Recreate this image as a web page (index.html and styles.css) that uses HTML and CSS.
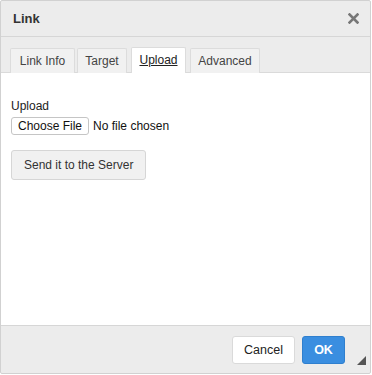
FILE: index.html
```html
<!DOCTYPE html>
<html lang="en">
<head>
  <meta charset="UTF-8">
  <title>Link</title>
  <link rel="stylesheet" href="styles.css">
</head>
<body>
  <div class="dialog">
    <div class="dialog-head">
      <span class="dialog-title">Link</span>
      <svg class="dialog-close" width="11" height="11" viewBox="0 0 11 11">
        <path d="M1.5 1.5 L9.5 9.5 M9.5 1.5 L1.5 9.5" stroke="#777" stroke-width="2.6" stroke-linecap="square"/>
      </svg>
    </div>

    <div class="tabs">
      <span class="tab tab-info">Link Info</span>
      <span class="tab tab-target">Target</span>
      <span class="tab tab-upload tab-active">Upload</span>
      <span class="tab tab-advanced">Advanced</span>
    </div>

    <div class="panel">
      <label class="field-label">Upload</label>
      <div class="file-row">
        <span class="file-btn">Choose File</span>
        <span class="file-name">No file chosen</span>
      </div>
      <span class="send-btn">Send it to the Server</span>
    </div>

    <div class="dialog-foot">
      <span class="btn btn-cancel">Cancel</span>
      <span class="btn btn-ok">OK</span>
      <span class="grip"></span>
    </div>
  </div>
</body>
</html>
```

FILE: styles.css
```css
body {
  margin: 0;
  background: #ffffff;
  font-family: 'Liberation Sans', Arial, sans-serif;
  font-size: 12px;
  color: #222;
}

.dialog {
  width: 371px;
  height: 374px;
  box-sizing: border-box;
  border: 1px solid #d1d1d1;
  border-radius: 2px;
  background: #ececec;
  display: flex;
  flex-direction: column;
}

.dialog-head {
  height: 35px;
  border-bottom: 1px solid #d6d6d6;
  display: flex;
  align-items: center;
  justify-content: space-between;
  padding: 0 11px 0 12px;
}

.dialog-title {
  font-weight: bold;
  font-size: 13px;
  color: #333;
}

.tabs {
  display: flex;
  gap: 2px;
  padding: 10px 9px 0;
  height: 25px;
  border-bottom: 1px solid #dadada;
}

.tab {
  box-sizing: border-box;
  height: 25px;
  margin-top: 1px;
  background: #f1f1f1;
  border: 1px solid #dcdcdc;
  border-bottom: none;
  border-radius: 2px 2px 0 0;
  line-height: 25px;
  text-align: center;
  color: #444;
}

.tab-info { width: 65px; }
.tab-target { width: 50px; }
.tab-upload { width: 55px; }
.tab-advanced { width: 70px; }

.tab-active {
  margin: 0 2px -1px;
  height: 27px;
  background: #ffffff;
  text-decoration: underline;
  color: #222;
}

.panel {
  flex: 1;
  background: #ffffff;
  padding: 26px 10px 0;
  display: flex;
  flex-direction: column;
  align-items: flex-start;
}

.field-label {
  color: #222;
  line-height: 14px;
}

.file-row {
  display: flex;
  align-items: center;
  margin-top: 4px;
}

.file-btn {
  border: 1px solid #c5c5c5;
  border-radius: 3px;
  padding: 1px 6px;
  background: #ffffff;
  color: #111;
}

.file-name {
  margin-left: 4px;
  color: #111;
}

.send-btn {
  margin-top: 15px;
  padding: 7px 12px;
  background: #f1f1f1;
  border: 1px solid #d6d6d6;
  border-radius: 3px;
  color: #333;
  line-height: 14px;
}

.dialog-foot {
  height: 47px;
  border-top: 1px solid #d6d6d6;
  display: flex;
  align-items: center;
  justify-content: flex-end;
  gap: 7px;
  padding: 0 25px 0 0;
  position: relative;
}

.btn {
  box-sizing: border-box;
  height: 28px;
  line-height: 26px;
  border-radius: 3px;
  font-size: 12.5px;
  border: 1px solid #dadada;
}

.btn-cancel {
  width: 63px;
  text-align: center;
  background: #ffffff;
  color: #222;
}

.btn-ok {
  width: 43px;
  text-align: center;
  background: #3a8ee0;
  border-color: #2f7fce;
  color: #ffffff;
  font-weight: bold;
}

.grip {
  position: absolute;
  right: 4px;
  bottom: 8px;
  width: 0;
  height: 0;
  border-left: 9px solid transparent;
  border-bottom: 9px solid #555;
}
```
